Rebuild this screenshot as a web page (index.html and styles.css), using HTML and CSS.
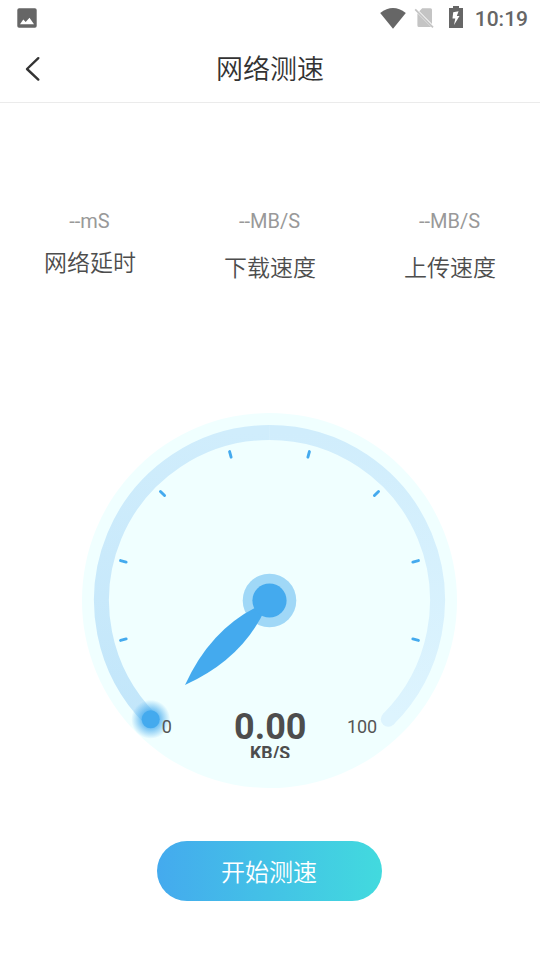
FILE: index.html
```html
<!DOCTYPE html>
<html lang="zh-CN">
<head>
<meta charset="utf-8">
<title>网络测速</title>
<link rel="stylesheet" href="styles.css">
</head>
<body>
<div class="status">
  <svg class="picture" width="20" height="20" viewBox="0 0 20 20"><rect x=".3" y=".3" width="19.4" height="19.4" rx="1.8" fill="#666"/><path d="M3 16.2 6.3 11.6 8.7 14 12.5 9.8 17 16.2Z" fill="#fff"/></svg>
  <div class="status-right">
    <svg class="wifi" width="26" height="21" viewBox="0 0 26 21"><path d="M.2 5.1Q13-5 25.8 5.1L13 20.7Z" fill="#666"/></svg>
    <svg class="sim" width="20" height="22" viewBox="0 0 20 22"><path d="M8.2 1.2H16.5Q18 1.2 18 2.7V17L5.3 4.3ZM3.4 6.2 17.2 20H5Q3.4 20 3.4 18.4Z" fill="#c4c4c4"/><path d="M1.2 2.4 19 20.4" stroke="#c4c4c4" stroke-width="1.7"/></svg>
    <svg class="battery" width="14" height="22" viewBox="0 0 14 22"><path d="M4 0H10V2H14V22H0V2H4Z" fill="#666"/><path d="M9.6 5.2 4.2 6.3 3.5 12.5H6.3L5 19 10.5 10H7.8Z" fill="#fff"/></svg>
    <span class="clock">10:19</span>
  </div>
</div>
<header class="header">
  <svg class="back" width="16" height="26" viewBox="0 0 16 26"><path d="M13.3 2.2 2 13 13.3 23.6" fill="none" stroke="#333" stroke-width="2.4" stroke-linecap="round" stroke-linejoin="round"/></svg>
  <h1 class="title">网络测速</h1>
</header>
<section class="stats">
  <div class="stat stat-delay"><div class="value">--mS</div><div class="label">网络延时</div></div>
  <div class="stat"><div class="value">--MB/S</div><div class="label">下载速度</div></div>
  <div class="stat"><div class="value">--MB/S</div><div class="label">上传速度</div></div>
</section>
<svg class="gauge" width="377" height="377" viewBox="-188.5 -188.5 377 377">
  <defs>
    <linearGradient id="arc-left" gradientUnits="userSpaceOnUse" x1="0" y1="119" x2="0" y2="-168"><stop offset="0" stop-color="#c2e6fa"/><stop offset="1" stop-color="#d0edfc"/></linearGradient>
    <linearGradient id="arc-right" gradientUnits="userSpaceOnUse" x1="0" y1="-168" x2="0" y2="119"><stop offset="0" stop-color="#d0edfc"/><stop offset="1" stop-color="#ddf4fe"/></linearGradient>
    <radialGradient id="glow"><stop offset=".4" stop-color="#44aaee" stop-opacity=".8"/><stop offset="1" stop-color="#44aaee" stop-opacity="0"/></radialGradient>
    <clipPath id="readout"><rect x="-50" y="100" width="100" height="57.5"/></clipPath>
  </defs>
  <circle r="187.5" fill="#f0ffff"/>
  <g fill="none" stroke-width="15">
    <path d="M-118.8 118.8A168 168 0 0 1 .3-168" stroke="url(#arc-left)"/>
    <path d="M0-168A168 168 0 0 1 118.8 118.8" stroke="url(#arc-right)"/>
  </g>
  <circle cx="118.8" cy="118.8" r="7.5" fill="#ddf4fe"/>
  <g stroke="#44aaee" stroke-width="2.9" stroke-linecap="round">
    <path id="tick" d="M-154.2 0H-148.4" transform="rotate(-15)"/>
    <use href="#tick" transform="rotate(30)"/>
    <use href="#tick" transform="rotate(60)"/>
    <use href="#tick" transform="rotate(90)"/>
    <use href="#tick" transform="rotate(120)"/>
    <use href="#tick" transform="rotate(150)"/>
    <use href="#tick" transform="rotate(180)"/>
    <use href="#tick" transform="rotate(210)"/>
  </g>
  <circle r="26.8" fill="#a0d8f7"/>
  <path d="M-84.5 84.5Q-58.5 27-8 4L-4 8Q-27 58.5-84.5 84.5Z" fill="#44aaee"/>
  <circle r="17.1" fill="#44aaee"/>
  <circle cx="-118.8" cy="118.8" r="19.5" fill="url(#glow)"/>
  <circle cx="-118.8" cy="118.8" r="9" fill="#44aaee"/>
  <text class="scale" x="-107.7" y="132.5">0</text>
  <text class="scale" x="77.4" y="132.5">100</text>
  <text class="speed" x=".8" y="138.5">0.00</text>
  <g clip-path="url(#readout)"><text class="unit" x=".6" y="158.5">KB/S</text></g>
</svg>
<button class="start">开始测速</button>
</body>
</html>
```
FILE: styles.css
```css
* { box-sizing: border-box; }
body {
  margin: 0;
  width: 540px;
  height: 960px;
  overflow: hidden;
  background: #fff;
  display: flex;
  flex-direction: column;
  font-family: Roboto, "Noto Sans CJK SC", sans-serif;
}
svg { display: block; flex: none; }
.status {
  height: 36px;
  padding: 0 12px 0 17px;
  display: flex;
  align-items: center;
  justify-content: space-between;
}
.status-right { display: flex; align-items: center; }
.sim { margin-left: 8px; }
.battery { margin: -2px 0 0 15px; }
.clock {
  margin-left: 12px;
  font-size: 21px;
  font-weight: 500;
  line-height: 36px;
  padding-top: 1px;
  color: #666;
}
.header {
  height: 67px;
  border-bottom: 1px solid #ebebeb;
  display: grid;
  grid-template-columns: 64px 1fr 64px;
  align-items: center;
}
.back { margin-left: 25px; }
.title {
  margin: 0;
  padding-top: 1px;
  text-align: center;
  font-size: 27px;
  font-weight: 350;
  line-height: 40px;
  color: #333;
}
.stats {
  height: 309px;
  padding-top: 106px;
  display: grid;
  grid-template-columns: repeat(3, 180px);
  text-align: center;
}
.value { padding-right: 1px; font-size: 20px; line-height: 24px; color: #999; }
.label { margin-top: 19px; font-size: 23px; font-weight: 350; line-height: 34px; color: #4d4d4d; }
.stat-delay .label { margin-top: 14px; }
.gauge { margin-left: 81px; }
.scale { font-size: 18px; fill: #555; }
.speed { font-size: 36px; font-weight: 700; text-anchor: middle; fill: #4d4d4d; }
.unit { font-size: 17.7px; font-weight: 700; text-anchor: middle; fill: #4d4d4d; }
.start {
  width: 225px;
  height: 60px;
  margin: 52px 0 0 157px;
  padding: 5px 1px 0 0;
  border: 0;
  border-radius: 30px;
  background: linear-gradient(90deg, #44aaee, #42dade);
  color: #fff;
  font: 350 24px/55px Roboto, "Noto Sans CJK SC", sans-serif;
}
```
